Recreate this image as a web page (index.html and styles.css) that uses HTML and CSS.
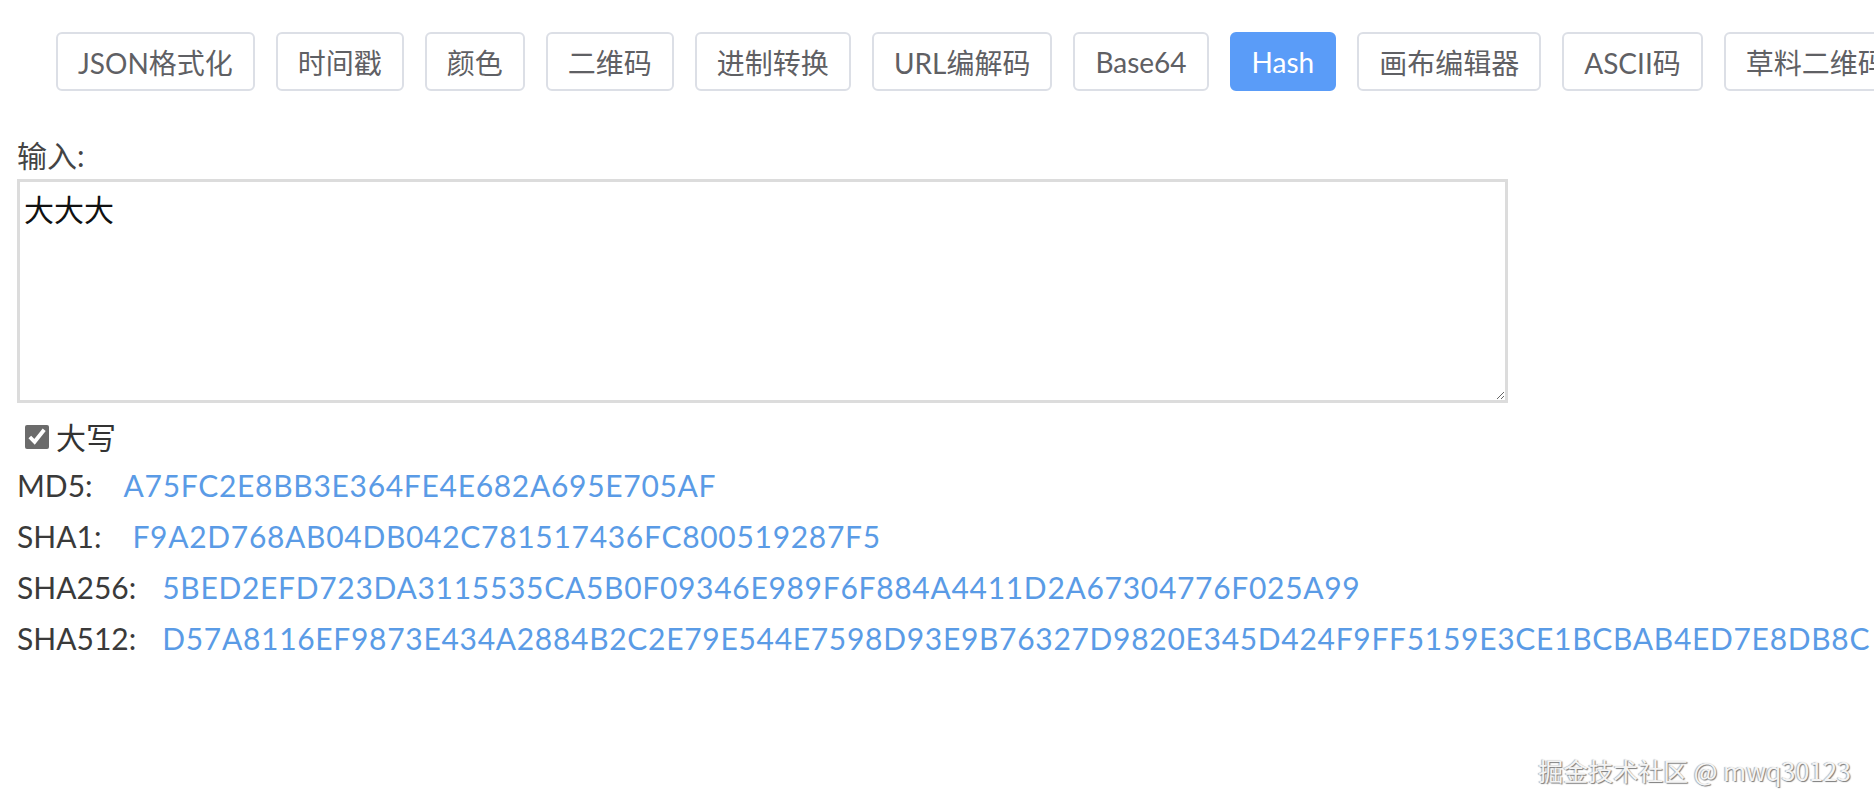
FILE: index.html
```html
<!DOCTYPE html>
<html lang="zh-CN">
<head>
    <meta charset="UTF-8">
    <meta name="viewport" content="width=device-width, initial-scale=1.0">
    <title>Hash</title>
    <link rel="stylesheet" href="styles.css">
</head>
<body>
    <nav class="tool-nav">
        <button class="tool-btn">JSON格式化</button>
        <button class="tool-btn">时间戳</button>
        <button class="tool-btn">颜色</button>
        <button class="tool-btn">二维码</button>
        <button class="tool-btn">进制转换</button>
        <button class="tool-btn">URL编解码</button>
        <button class="tool-btn">Base64</button>
        <button class="tool-btn active">Hash</button>
        <button class="tool-btn">画布编辑器</button>
        <button class="tool-btn">ASCII码</button>
        <button class="tool-btn">草料二维码</button>
    </nav>

    <div class="hash-panel">
        <label class="input-label" for="hash-input">输入:</label>
        <textarea id="hash-input" class="hash-input">大大大</textarea>

        <label class="upper-check">
            <input type="checkbox" checked>大写
        </label>

        <div class="hash-row"><span class="hash-name short">MD5:</span><span class="hash-value">A75FC2E8BB3E364FE4E682A695E705AF</span></div>
        <div class="hash-row"><span class="hash-name short">SHA1:</span><span class="hash-value">F9A2D768AB04DB042C781517436FC800519287F5</span></div>
        <div class="hash-row"><span class="hash-name">SHA256:</span><span class="hash-value">5BED2EFD723DA3115535CA5B0F09346E989F6F884A4411D2A67304776F025A99</span></div>
        <div class="hash-row"><span class="hash-name">SHA512:</span><span class="hash-value">D57A8116EF9873E434A2884B2C2E79E544E7598D93E9B76327D9820E345D424F9FF5159E3CE1BCBAB4ED7E8DB8C</span></div>
    </div>

    <div class="watermark">掘金技术社区 @ mwq30123</div>
</body>
</html>
```

FILE: styles.css
```css
/* Global Styles */
* {
    margin: 0;
    padding: 0;
    box-sizing: border-box;
}

body {
    font-family: 'Lato', 'Noto Sans CJK SC', sans-serif;
    color: #333333;
    background-color: #ffffff;
    overflow: hidden;
    height: 810px;
    position: relative;
}

/* Tool buttons */
.tool-nav {
    display: flex;
    gap: 21px;
    padding: 32px 0 0 56px;
    white-space: nowrap;
}

.tool-btn {
    flex-shrink: 0;
    height: 59px;
    padding: 0 20px;
    font-family: 'Lato', 'Noto Sans CJK SC', sans-serif;
    font-size: 28px;
    color: #5f6064;
    background-color: #ffffff;
    border: 2px solid #dcdfe6;
    border-radius: 6px;
    cursor: pointer;
}

.tool-btn.active {
    background-color: #5a9cf8;
    border-color: #5a9cf8;
    color: #ffffff;
}

/* Hash panel */
.hash-panel {
    padding: 0 17px;
}

.input-label {
    display: block;
    margin-top: 44px;
    font-size: 30px;
    line-height: 40px;
    color: #444444;
}

.hash-input {
    display: block;
    width: 1491px;
    height: 224px;
    margin-top: 4px;
    padding: 8px 4px;
    border: 3px solid #dcdcdc;
    font-family: 'Noto Sans CJK SC', sans-serif;
    font-size: 30px;
    line-height: 36px;
    color: #111111;
    outline: none;
}

.upper-check {
    display: flex;
    align-items: center;
    margin-top: 14px;
    font-size: 30px;
    line-height: 40px;
    color: #333333;
}

.upper-check input {
    width: 24px;
    height: 24px;
    margin: 0 7px 0 8px;
    accent-color: #6b6b6b;
}

.hash-row {
    font-size: 30px;
    line-height: 51px;
    white-space: nowrap;
}

.hash-row:first-of-type {
    margin-top: 3px;
}

.hash-name {
    color: #3a3a3a;
}

.hash-name.short {
    margin-right: 5px;
}

.hash-value {
    margin-left: 26px;
    color: #5a9be6;
    letter-spacing: 0.7px;
}

.watermark {
    position: absolute;
    right: 23px;
    bottom: 22px;
    font-family: 'Noto Sans CJK SC', sans-serif;
    font-size: 25px;
    color: #f4f4f4;
    text-shadow: 1px 1px 1px #7a7a7a, -1px 0 1px #b0b0b0;
}
```
